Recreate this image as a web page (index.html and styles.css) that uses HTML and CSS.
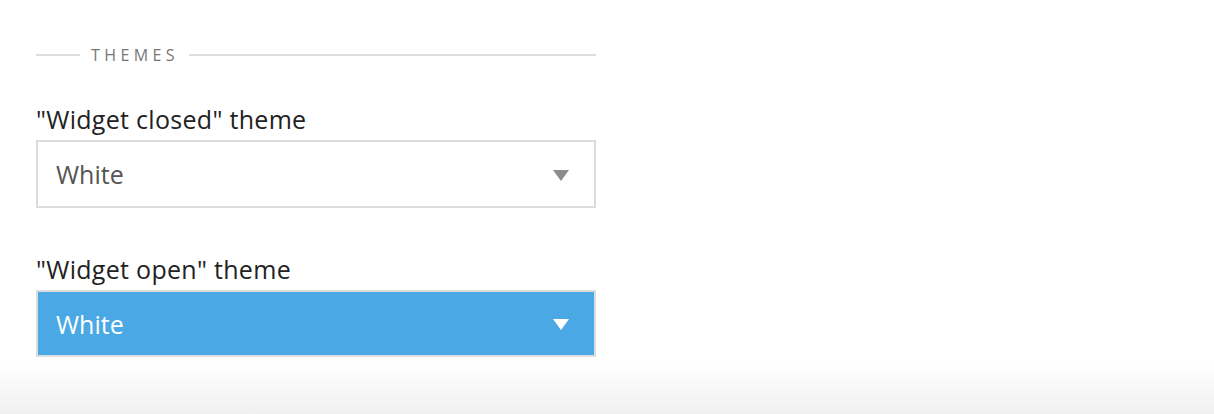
FILE: index.html
```html
<!DOCTYPE html>
<html>
<head>
  <meta charset="UTF-8">
  <link rel="stylesheet" href="styles.css">
  <title>Themes</title>
</head>
<body>
  <div class="panel">
    <div class="section-title">
      <span class="rule short"></span>
      <span class="section-name">Themes</span>
      <span class="rule"></span>
    </div>

    <div class="field">
      <div class="label">"Widget closed" theme</div>
      <div class="select">
        <span class="value">White</span>
        <svg class="caret" width="16" height="11" viewBox="0 0 16 11"><path d="M0 0H16L8 11Z" fill="#8c8c8c"/></svg>
      </div>
    </div>

    <div class="field">
      <div class="label">"Widget open" theme</div>
      <div class="select active">
        <span class="value">White</span>
        <svg class="caret" width="16" height="11" viewBox="0 0 16 11"><path d="M0 0H16L8 11Z" fill="#ffffff"/></svg>
      </div>
    </div>
  </div>
  <div class="shade"></div>
</body>
</html>
```

FILE: styles.css
```css
body {
	margin: 0;
	background: #ffffff;
	font-family: "Open Sans", "Noto Sans", sans-serif;
}
.panel {
	width: 560px;
	padding: 44px 0 7px 36px;
}
.section-title {
	display: flex;
	align-items: center;
	height: 22px;
}
.rule {
	flex: 1;
	height: 2px;
	background: #dedede;
}
.rule.short {
	flex: 0 0 44px;
}
.section-name {
	padding: 0 10px 0 11px;
	font-size: 16px;
	letter-spacing: 4.4px;
	text-transform: uppercase;
	color: #777777;
}
.field {
	margin-top: 38px;
}
.field + .field {
	margin-top: 46px;
}
.label {
	font-size: 25px;
	line-height: 30px;
	letter-spacing: 0.3px;
	color: #222222;
	margin-bottom: 6px;
}
.select {
	display: flex;
	align-items: center;
	justify-content: space-between;
	height: 64px;
	padding: 0 25px 0 18px;
	border: 2px solid #dcdcdc;
	background: #ffffff;
	color: #555555;
	font-size: 25px;
}
.select.active {
	background: #4aa9e4;
	color: #ffffff;
	height: 63px;
}
.caret {
	display: block;
	margin-top: 2px;
}
.shade {
	height: 50px;
	background: linear-gradient(#ffffff, #f0f0f0);
}
```
